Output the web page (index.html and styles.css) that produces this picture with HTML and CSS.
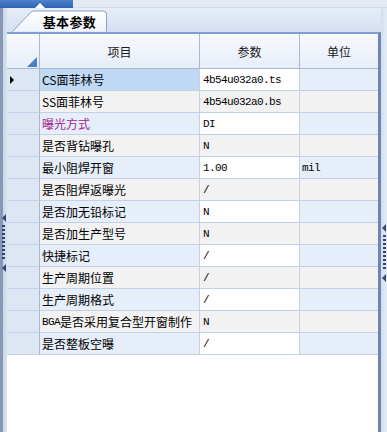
FILE: index.html
```html
<!DOCTYPE html>
<html lang="zh">
<head>
<meta charset="utf-8">
<link rel="stylesheet" href="styles.css">
</head>
<body>
<div class="topbar">
  <div class="topbar-blue"><span class="up-tri"></span></div>
  <div class="topbar-rest"></div>
</div>
<div class="main">
  <div class="edge edge-left">
    <div class="grip">
      <span class="grip-arrow"></span>
      <span class="grip-dots"></span>
      <span class="grip-arrow"></span>
    </div>
  </div>
  <div class="panel">
    <div class="tabstrip">
      <div class="tab">
        <svg class="tab-shape" width="96" height="22" viewBox="0 0 96 22">
          <path d="M0.5 21.5 L18.5 2.5 Q20 1 22 1 L91 1 Q94.5 1 94.5 4.5 L94.5 21.5" fill="url(#tabg)" stroke="#8aa0c0" stroke-width="1"/>
          <defs>
            <linearGradient id="tabg" x1="0" y1="0" x2="0" y2="1">
              <stop offset="0" stop-color="#ffffff"/>
              <stop offset="1" stop-color="#eef3fa"/>
            </linearGradient>
          </defs>
        </svg>
        <span class="tab-label">基本参数</span>
      </div>
    </div>
    <div class="grid">
      <div class="hcell corner"><span class="corner-tri"></span></div>
      <div class="hcell">项目</div>
      <div class="hcell">参数</div>
      <div class="hcell hlast">单位</div>

      <div class="rh"><span class="ptr"></span></div>
      <div class="c item sel">CS面菲林号</div>
      <div class="c val odd">4b54u032a0.ts</div>
      <div class="c unit odd"></div>

      <div class="rh"></div>
      <div class="c item even">SS面菲林号</div>
      <div class="c val even">4b54u032a0.bs</div>
      <div class="c unit even"></div>

      <div class="rh"></div>
      <div class="c item odd purple">曝光方式</div>
      <div class="c val odd">DI</div>
      <div class="c unit odd"></div>

      <div class="rh"></div>
      <div class="c item even">是否背钻曝孔</div>
      <div class="c val even">N</div>
      <div class="c unit even"></div>

      <div class="rh"></div>
      <div class="c item odd">最小阻焊开窗</div>
      <div class="c val odd">1.00</div>
      <div class="c unit odd mono">mil</div>

      <div class="rh"></div>
      <div class="c item even">是否阻焊返曝光</div>
      <div class="c val even">/</div>
      <div class="c unit even"></div>

      <div class="rh"></div>
      <div class="c item odd">是否加无铅标记</div>
      <div class="c val odd">N</div>
      <div class="c unit odd"></div>

      <div class="rh"></div>
      <div class="c item even">是否加生产型号</div>
      <div class="c val even">N</div>
      <div class="c unit even"></div>

      <div class="rh"></div>
      <div class="c item odd">快捷标记</div>
      <div class="c val odd">/</div>
      <div class="c unit odd"></div>

      <div class="rh"></div>
      <div class="c item even">生产周期位置</div>
      <div class="c val even">/</div>
      <div class="c unit even"></div>

      <div class="rh"></div>
      <div class="c item odd">生产周期格式</div>
      <div class="c val odd">/</div>
      <div class="c unit odd"></div>

      <div class="rh"></div>
      <div class="c item even"><span class="mono">BGA</span>是否采用复合型开窗制作</div>
      <div class="c val even">N</div>
      <div class="c unit even"></div>

      <div class="rh"></div>
      <div class="c item odd">是否整板空曝</div>
      <div class="c val odd">/</div>
      <div class="c unit odd"></div>
    </div>
    <div class="empty"></div>
  </div>
  <div class="edge edge-right">
    <div class="grip grip-right">
      <span class="grip-arrow"></span>
      <span class="grip-dots"></span>
      <span class="grip-arrow"></span>
    </div>
  </div>
</div>
</body>
</html>
```

FILE: styles.css
```css
html, body {
  margin: 0;
  padding: 0;
}
body {
  width: 387px;
  height: 432px;
  overflow: hidden;
  background: #ffffff;
  font-family: "Noto Sans CJK SC", "Liberation Sans", sans-serif;
  font-size: 12px;
  color: #000;
}
.topbar {
  display: flex;
  height: 8px;
}
.topbar-blue {
  width: 73px;
  background: linear-gradient(#4f82cc, #2f62b2);
  display: flex;
  justify-content: center;
  align-items: flex-end;
}
.up-tri {
  width: 0;
  height: 0;
  border-left: 5px solid transparent;
  border-right: 5px solid transparent;
  border-bottom: 5px solid #ffffff;
  margin-left: 6px;
}
.topbar-rest {
  flex: 1;
  background: #e4eaf2;
  border-bottom: 1px solid #d3dceb;
  box-sizing: border-box;
}
.main {
  display: flex;
  height: 424px;
}
.edge {
  width: 7px;
  display: flex;
  flex-direction: column;
}
.edge-left {
  background: linear-gradient(90deg, #8798b4 0, #8798b4 3px, #c9d6e8 3px, #d8e3f2 7px);
}
.edge-right {
  width: 6px;
  background: linear-gradient(90deg, #d3deee 0, #e3ebf6 6px);
}
.grip {
  margin-top: 206px;
  display: flex;
  flex-direction: column;
  align-items: center;
  gap: 3px;
}
.grip-right {
  margin-top: 216px;
}
.grip-arrow {
  width: 0;
  height: 0;
  border-top: 4px solid transparent;
  border-bottom: 4px solid transparent;
  border-right: 4px solid #34497a;
}
.grip-dots {
  width: 3px;
  height: 36px;
  background: repeating-linear-gradient(#2e4376 0, #2e4376 2px, transparent 2px, transparent 4px);
}
.panel {
  flex: 1;
  display: flex;
  flex-direction: column;
  background: #ffffff;
}
.tabstrip {
  height: 24px;
  background: linear-gradient(#e6edf7, #d3e0f2);
  display: flex;
  align-items: flex-end;
  padding-left: 5px;
  box-sizing: border-box;
  margin-right: -6px;
}
.tab {
  position: relative;
  width: 96px;
  height: 22px;
  display: flex;
  align-items: center;
  justify-content: flex-end;
}
.tab-shape {
  position: absolute;
  left: 0;
  top: 0;
}
.tab-label {
  position: relative;
  font-weight: bold;
  font-size: 13px;
  padding-right: 12px;
  letter-spacing: 0.3px;
}
.grid {
  display: grid;
  grid-template-columns: 33px 160px 100px 1fr;
  grid-template-rows: 35px repeat(13, 22px);
  border-top: 2px solid #7d9fd3;
  border-right: 3px solid #6d86b0;
}
.hcell {
  background: linear-gradient(#f7f9fd, #e7eef8);
  border-right: 1px solid #a9b9d2;
  border-bottom: 1px solid #a9b9d2;
  display: flex;
  align-items: center;
  justify-content: center;
  font-size: 12px;
  color: #1a1a1a;
  box-sizing: border-box;
}
.hlast {
  border-right: none;
}
.corner {
  position: relative;
}
.corner-tri {
  position: absolute;
  right: 2px;
  bottom: 1px;
  width: 0;
  height: 0;
  border-left: 10px solid transparent;
  border-bottom: 10px solid #4a7dcc;
}
.rh {
  background: #dde7f4;
  border-right: 1px solid #a9b9d2;
  border-bottom: 1px solid #c2d1e8;
  box-sizing: border-box;
  display: flex;
  align-items: center;
  padding-left: 3px;
}
.ptr {
  width: 0;
  height: 0;
  border-top: 4px solid transparent;
  border-bottom: 4px solid transparent;
  border-left: 4px solid #000;
}
.c {
  border-right: 1px solid #c2d1e8;
  border-bottom: 1px solid #c2d1e8;
  box-sizing: border-box;
  display: flex;
  align-items: center;
  padding-left: 2px;
  white-space: nowrap;
  overflow: hidden;
}
.unit {
  border-right: none;
}
.item.odd { background: #e6eef9; }
.item.even { background: #f2f2f2; }
.item.sel { background: #bfd9f5; }
.val.odd { background: #ffffff; }
.val.even { background: #f2f2f2; }
.unit.odd { background: #e6eef9; }
.unit.even { background: #f2f2f2; }
.val, .mono {
  font-family: "Liberation Mono", "DejaVu Sans Mono", monospace;
  font-size: 11px;
  letter-spacing: -0.6px;
}
.val {
  padding-left: 3px;
}
.purple {
  color: #a3238e;
}
.empty {
  flex: 1;
  border-right: 3px solid #6d86b0;
}
```
